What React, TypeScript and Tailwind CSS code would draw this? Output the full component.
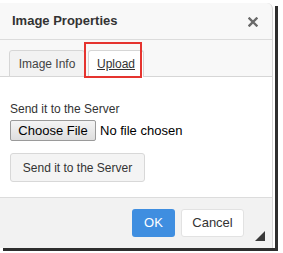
export default function App() {
  const font = { fontFamily: '"Liberation Sans", Arial, sans-serif' }
  return (
    <div
      className="relative h-[253px] w-[283px] overflow-hidden bg-white text-[#333]"
      style={font}
    >
      {/* dialog */}
      <div className="mt-[3px] flex h-[245px] w-[273px] flex-col overflow-hidden rounded-tr-[6px] border-r border-[#d6d6d6] bg-[#f8f8f8]">
        <div className="flex h-[37px] shrink-0 items-center justify-between border-b border-[#dcdcdc] pl-[12px] pr-[14px]">
          <span className="text-[13px] font-bold text-[#333]">Image Properties</span>
          <svg width="10" height="10" viewBox="0 0 10 10" className="mt-[1px]">
            <path
              d="M1.5 1.5 L8.5 8.5 M8.5 1.5 L1.5 8.5"
              stroke="#6a6a6a"
              strokeWidth="2.4"
              strokeLinecap="square"
            />
          </svg>
        </div>

        <div className="relative flex h-[37px] shrink-0 items-end gap-[3px] border-b border-[#d6d6d6] pl-[9px]">
          <div className="-mb-px flex h-[27px] w-[76px] items-center justify-center rounded-t-[3px] border border-[#d6d6d6] bg-[#f2f2f2] text-[12px] text-[#444]">
            Image Info
          </div>
          <div className="-mb-px flex h-[27px] w-[56px] items-center justify-center rounded-t-[3px] border border-b-0 border-[#d6d6d6] bg-white text-[12px] text-[#333] underline">
            Upload
          </div>
          {/* highlight box */}
          <div className="absolute left-[84px] top-[2px] h-[36px] w-[58px] border-2 border-[#e5342f]" />
        </div>

        <div className="flex h-[120px] shrink-0 flex-col items-start bg-white pl-[10px] pt-[25px]">
          <div className="text-[12px] leading-[15px] text-[#333]">Send it to the Server</div>
          <div className="mt-[3px] flex items-center gap-[4px]">
            <div className="flex h-[21px] w-[86px] items-center justify-center rounded-[2px] border border-[#9a9a9a] bg-gradient-to-b from-[#f4f4f4] to-[#dedede] text-[13px] text-black">
              Choose File
            </div>
            <span className="text-[13px] text-black">No file chosen</span>
          </div>
          <div className="mt-[12px] flex h-[29px] w-[135px] items-center justify-center rounded-[3px] border border-[#d8d8d8] bg-[#f4f4f4] text-[12px] text-[#333]">
            Send it to the Server
          </div>
        </div>

        <div className="relative flex flex-1 items-start justify-end gap-[6px] border-t border-[#dcdcdc] bg-[#f2f2f2] pr-[28px] pt-[11px]">
          <div className="flex h-[28px] w-[43px] items-center justify-center rounded-[3px] bg-[#3f8ee0] text-[13px] text-white">
            OK
          </div>
          <div className="flex h-[28px] w-[63px] items-center justify-center rounded-[3px] border border-[#e2e2e2] bg-white text-[13px] text-[#333]">
            Cancel
          </div>
          <svg width="10" height="10" viewBox="0 0 10 10" className="absolute bottom-[7px] right-[7px]">
            <path d="M10 0 L10 10 L0 10 Z" fill="#3a3a3a" />
          </svg>
        </div>
      </div>

      {/* screenshot drop shadow */}
      <div className="absolute left-[275px] top-[6px] h-[245px] w-[3px] bg-[#2e2e2e]" />
      <div className="absolute left-[3px] top-[248px] h-[3px] w-[275px] bg-[#2e2e2e]" />
    </div>
  )
}
